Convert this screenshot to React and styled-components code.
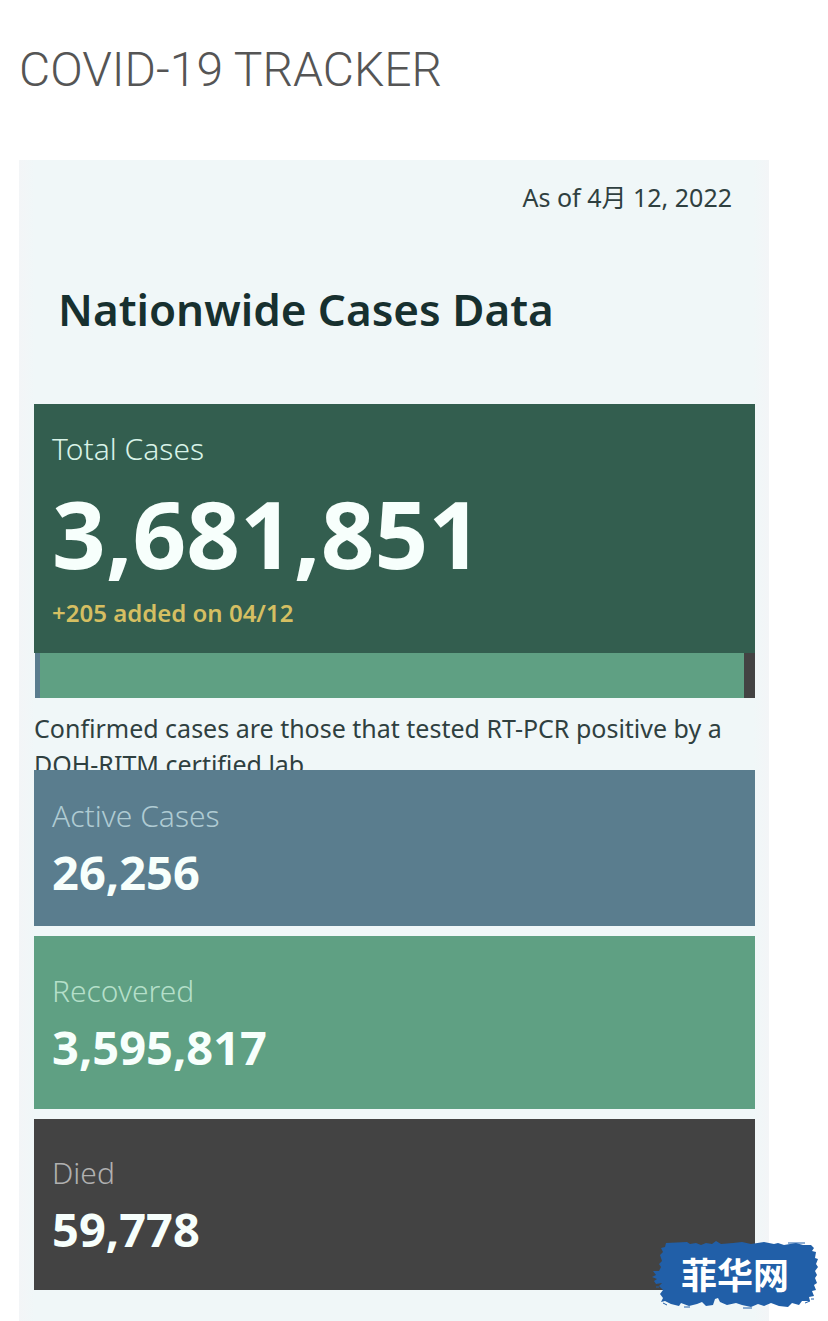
import React from "react";
import styled, { createGlobalStyle } from "styled-components";

const GlobalStyle = createGlobalStyle`
  * { box-sizing: border-box; }
  body {
    margin: 0;
    background: #ffffff;
    font-family: "Noto Sans", "Noto Sans CJK SC", sans-serif;
    color: #2f4040;
  }
  h1, h2, p, dl, dt, dd { margin: 0; }
`;

const Page = styled.main`
  position: relative;
  padding: 36px 59px 0 19px;
`;

const PageTitle = styled.h1`
  font: 300 48px/68px Roboto, sans-serif;
  color: #555555;
`;

const Dashboard = styled.section`
  margin-top: 56px;
  padding: 19px 14px 31px 15px;
  background: linear-gradient(to right, #f3f5f7, #f0f7f8 16px calc(100% - 16px), #f3f5f7);
`;

const AsOf = styled.p`
  padding-right: 23px;
  font-size: 25px;
  line-height: 36px;
  text-align: right;
`;

const Heading = styled.h2`
  padding: 62px 24px 63px;
  font-size: 44px;
  font-weight: 600;
  line-height: 64px;
  color: #17302f;
`;

const TotalCard = styled.dl`
  padding: 22px 18px;
  background: #335e4f;
`;

const TotalLabel = styled.dt`
  font-size: 30px;
  font-weight: 300;
  line-height: 46px;
  color: #d9f3e8;
`;

const TotalValue = styled.dd`
  font-size: 94px;
  font-weight: 700;
  line-height: 123px;
  color: #f7fffc;
`;

const Added = styled.dd`
  font-size: 24px;
  font-weight: 600;
  line-height: 36px;
  color: #d5bf62;
`;

const Breakdown = styled.div`
  display: flex;
  height: 45px;
  padding-left: 1px;
`;

const Segment = styled.span`
  flex: ${(p) => p.$share} 1 0;
  background: ${(p) => p.$color};
`;

const Note = styled.p`
  height: 72px;
  padding-top: 12px;
  overflow: hidden;
  font-size: 25px;
  line-height: 36px;
`;

const Stats = styled.dl`
  display: flex;
  flex-direction: column;
  gap: 10px;
`;

const StatCard = styled.div`
  display: flex;
  flex-direction: column;
  justify-content: center;
  min-height: ${(p) => p.$height}px;
  padding: 0 18px;
  background: ${(p) => p.$color};
`;

const StatLabel = styled.dt`
  font-size: 30px;
  font-weight: 300;
  line-height: 48px;
  color: ${(p) => p.$color};
`;

const StatValue = styled.dd`
  font-size: 47px;
  font-weight: 700;
  line-height: 64px;
  color: #f7fffc;
`;

const Badge = styled.div`
  position: absolute;
  right: 9px;
  bottom: 11px;
  display: grid;
  place-items: center;
  width: 168px;
  height: 70px;
`;

const Brush = styled.svg`
  grid-area: 1 / 1;
  width: 100%;
  height: 100%;
`;

const BadgeText = styled.span`
  z-index: 1;
  grid-area: 1 / 1;
  padding-bottom: 4px;
  font: 700 36px/48px "Noto Sans CJK SC", sans-serif;
  color: #ffffff;
`;

const stats = [
  { label: "Active Cases", value: "26,256", color: "#5a7d8e", text: "#afcbd3", height: 156 },
  { label: "Recovered", value: "3,595,817", color: "#5fa083", text: "#b4dfc9", height: 173 },
  { label: "Died", value: "59,778", color: "#434343", text: "#b0b0b0", height: 171 },
];

const segments = [
  { share: 7, color: "#5a7d8e" },
  { share: 980, color: "#5fa083" },
  { share: 16, color: "#434343" },
];

export default function App() {
  return (
    <>
      <GlobalStyle />
      <Page>
        <PageTitle>COVID-19 TRACKER</PageTitle>
        <Dashboard>
          <AsOf>As of 4月 12, 2022</AsOf>
          <Heading>Nationwide Cases Data</Heading>
          <TotalCard>
            <TotalLabel>Total Cases</TotalLabel>
            <TotalValue>3,681,851</TotalValue>
            <Added>+205 added on 04/12</Added>
          </TotalCard>
          <Breakdown>
            {segments.map((s) => (
              <Segment key={s.color} $share={s.share} $color={s.color} />
            ))}
          </Breakdown>
          <Note>
            Confirmed cases are those that tested RT-PCR positive by a DOH-RITM certified lab
          </Note>
          <Stats>
            {stats.map((s) => (
              <StatCard key={s.label} $height={s.height} $color={s.color}>
                <StatLabel $color={s.text}>{s.label}</StatLabel>
                <StatValue>{s.value}</StatValue>
              </StatCard>
            ))}
          </Stats>
        </Dashboard>
        <Badge>
          <Brush viewBox="0 0 168 70" preserveAspectRatio="none" aria-hidden="true">
            <path
              fill="#215fa8"
              d="M15 3 L36 2 39 4 45 3 50 5 55 3 61 4 65 1 70 4 82 3 91 2 100 4 113 2 123 4 127 3 133 5 145 3 152 5 160 5 163 8 161 11 165 12 164 18 167 19 165 24 167 27 164 31 166 35 164 38 166 43 163 45 165 50 161 51 163 56 158 57 159 61 151 61 148 65 141 63 137 67 128 66 120 63 113 66 107 64 100 67 91 65 85 63 76 65 69 62 67 58 64 59 62 65 55 66 51 62 46 64 38 66 30 63 28 66 20 64 14 61 10 62 12 58 9 54 12 50 8 46 11 43 5 44 3 41 6 39 1 37 5 35 2 31 8 31 10 27 8 24 11 21 9 15 12 12 10 8 14 7 Z"
            />
            <path
              stroke="#215fa8"
              strokeWidth="1"
              fill="none"
              d="M137 3H154M154 63L159 61M33 67H39M92 68H101M12 63L16 65M160 59H163M5 47H8"
            />
          </Brush>
          <BadgeText>菲华网</BadgeText>
        </Badge>
      </Page>
    </>
  );
}
